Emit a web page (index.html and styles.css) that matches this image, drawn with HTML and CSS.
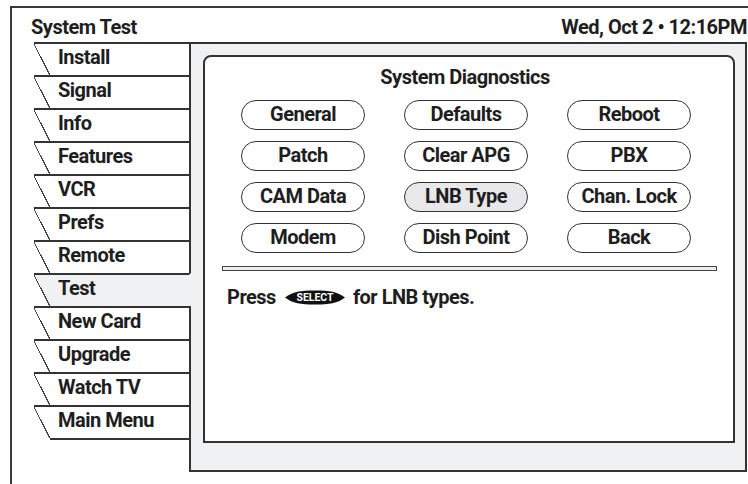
FILE: index.html
```html
<!DOCTYPE html>
<html>
	<head>
		<title>System Test</title>
		<meta charset="utf-8">
		<link rel="stylesheet" href="styles.css">
	</head>
	<body>
		<div class="screen">
			<header class="top">
				<span>System Test</span>
				<span>Wed, Oct 2 • 12:16PM</span>
			</header>
			<div class="main">
				<nav class="tabs">
					<div class="tab">Install</div>
					<div class="tab">Signal</div>
					<div class="tab">Info</div>
					<div class="tab">Features</div>
					<div class="tab">VCR</div>
					<div class="tab">Prefs</div>
					<div class="tab">Remote</div>
					<div class="tab on">Test</div>
					<div class="tab">New Card</div>
					<div class="tab">Upgrade</div>
					<div class="tab">Watch TV</div>
					<div class="tab">Main Menu</div>
				</nav>
				<section class="panel">
					<div class="box">
						<h1>System Diagnostics</h1>
						<div class="grid">
							<div class="btn">General</div>
							<div class="btn">Defaults</div>
							<div class="btn">Reboot</div>
							<div class="btn">Patch</div>
							<div class="btn">Clear APG</div>
							<div class="btn">PBX</div>
							<div class="btn">CAM Data</div>
							<div class="btn on">LNB Type</div>
							<div class="btn">Chan. Lock</div>
							<div class="btn">Modem</div>
							<div class="btn">Dish Point</div>
							<div class="btn">Back</div>
						</div>
						<div class="rule"></div>
						<p class="hint">
							<span>Press</span>
							<svg class="select-key" width="62" height="15" viewBox="0 0 62 15">
								<path d="M1 7.5C9 1.5 16 0.5 31 0.5S53 1.5 61 7.5C53 13.5 46 14.5 31 14.5S9 13.5 1 7.5Z" fill="#111"/>
								<text x="31" y="11.4" text-anchor="middle" textLength="37" lengthAdjust="spacingAndGlyphs">SELECT</text>
							</svg>
							<span>for LNB types.</span>
						</p>
					</div>
				</section>
			</div>
		</div>
	</body>
</html>
```

FILE: styles.css
```css
html, body {
	margin: 0;
	height: 100%;
	overflow: hidden;
	background-color: #fff;
}
body {
	font: 700 20px Roboto, 'Liberation Sans', sans-serif;
	letter-spacing: -0.5px;
	color: #1e1e1e;
}
.screen {
	margin: 6px 0 0 10px;
	width: 736px;
	height: 490px;
	border-top: 2px solid #3a3a3a;
	border-left: 2px solid #3a3a3a;
}
.top {
	display: flex;
	justify-content: space-between;
	padding: 6.5px 1px 3.5px 19px;
	line-height: 24px;
}
.main {
	display: flex;
	align-items: flex-start;
	padding: 0 1px 0 22px;
}

/* left tab strip */
.tabs {
	position: relative;
	z-index: 1;
	width: 157px;
	margin-right: -2px;
}
.tab {
	position: relative;
	height: 33px;
	box-sizing: border-box;
	border-top: 2px solid #333;
	border-right: 2px solid #333;
	padding-left: 24px;
	line-height: 26px;
	background: linear-gradient(#fff, #fff) no-repeat 16px 0 / calc(100% - 16px) 100%;
}
.tab::before {
	content: '';
	position: absolute;
	left: 0;
	top: 0;
	width: 16px;
	height: 31px;
	background: linear-gradient(to top right, transparent calc(50% - 0.7px), #444 calc(50% - 0.7px), #444 calc(50% + 0.5px), #fff calc(50% + 0.5px));
}
.tab.on {
	border-right-color: #f0f1f3;
	background-image: linear-gradient(#f0f1f3, #f0f1f3);
}
.tab.on::before {
	background: linear-gradient(to top right, transparent calc(50% - 0.7px), #444 calc(50% - 0.7px), #444 calc(50% + 0.5px), #f0f1f3 calc(50% + 0.5px));
}
.tab:last-child::after {
	content: '';
	position: absolute;
	left: 16px;
	right: -2px;
	bottom: -2px;
	height: 2px;
	background-color: #333;
}

/* right panel */
.panel {
	flex: 1;
	height: 430px;
	box-sizing: border-box;
	border: 2px solid #333;
	background-color: #f0f1f3;
	padding: 11px 10px 27px 12px;
}
.box {
	height: 100%;
	box-sizing: border-box;
	border: 2px solid #333;
	border-radius: 8px 8px 0 0;
	background-color: #fff;
}
h1 {
	margin: 0;
	padding: 8px 8px 0 0;
	font-size: 20px;
	line-height: 24px;
	text-align: center;
}
.grid {
	display: grid;
	grid-template-columns: repeat(3, 124px);
	column-gap: 39px;
	row-gap: 11px;
	margin-top: 11px;
	padding-left: 36px;
}
.btn {
	height: 30px;
	box-sizing: border-box;
	border: 1.5px solid #333;
	border-radius: 15px;
	line-height: 27px;
	text-align: center;
	background-color: #fff;
}
.btn.on {
	background-color: #e8e8ea;
}
.rule {
	margin: 13px 16px 0 17px;
	height: 3px;
	border: 1px solid #444;
	background-color: #eee;
}
.hint {
	display: flex;
	align-items: center;
	margin: 14px 0 0 22px;
	line-height: 24px;
}
.select-key {
	margin: 0 7px 0 8px;
}
.select-key text {
	fill: #fff;
	font: 700 11px Roboto, sans-serif;
	letter-spacing: 0;
}
```
